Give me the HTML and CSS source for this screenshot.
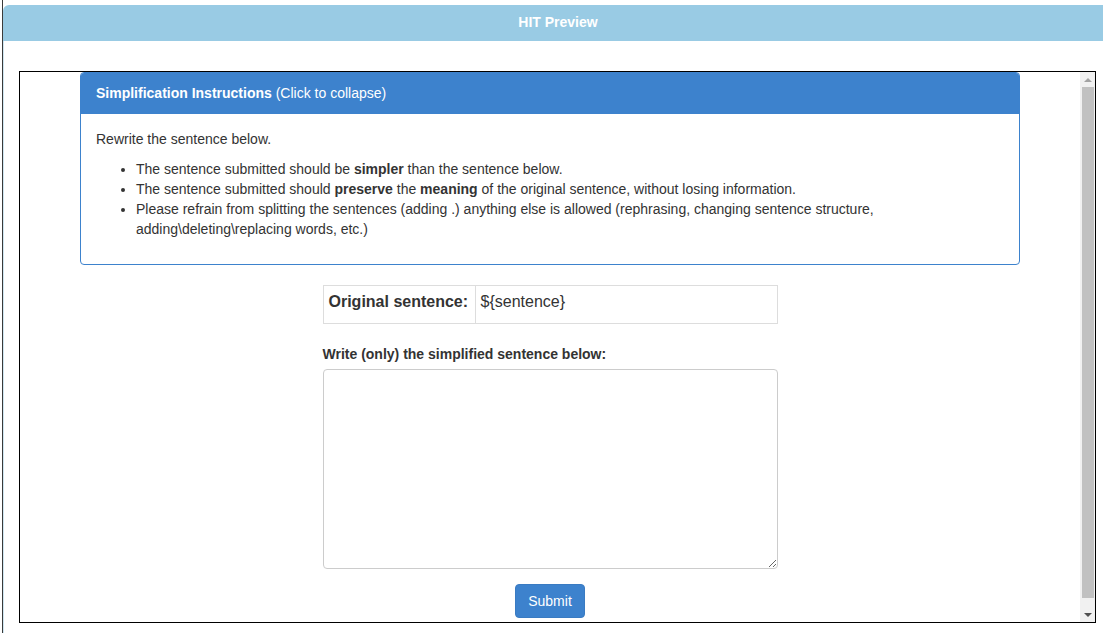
FILE: index.html
```html
<!DOCTYPE html>
<html>
<head>
<meta charset="utf-8">
<title>HIT Preview</title>
<link rel="stylesheet" href="styles.css">
</head>
<body>
<div class="page">
  <div class="hit-head">HIT Preview</div>
  <div class="hit-body">
    <div class="frame">
      <div class="frame-content">
        <div class="container">
          <div class="panel">
            <div class="panel-heading"><strong>Simplification Instructions</strong> (Click to collapse)</div>
            <div class="panel-body">
              <p>Rewrite the sentence below.</p>
              <ul>
                <li>The sentence submitted should be <strong>simpler</strong> than the sentence below.</li>
                <li>The sentence submitted should <strong>preserve</strong> the <strong>meaning</strong> of the original sentence, without losing information.</li>
                <li>Please refrain from splitting the sentences (adding .) anything else is allowed (rephrasing, changing sentence structure, adding\deleting\replacing words, etc.)</li>
              </ul>
            </div>
          </div>
          <div class="task">
            <table class="orig">
              <tr>
                <td class="orig-label">Original sentence:</td>
                <td class="orig-value">${sentence}</td>
              </tr>
            </table>
            <label class="answer-label" for="answer">Write (only) the simplified sentence below:</label>
            <textarea id="answer" class="answer"></textarea>
            <div class="actions"><button class="btn" type="button">Submit</button></div>
          </div>
        </div>
      </div>
      <div class="scrollbar">
        <div class="sb-btn sb-up"><span class="tri-up"></span></div>
        <div class="sb-track"><div class="sb-thumb"></div></div>
        <div class="sb-btn sb-down"><span class="tri-down"></span></div>
      </div>
    </div>
  </div>
</div>
</body>
</html>
```
FILE: styles.css
```css
html, body {
  margin: 0;
  padding: 0;
  background: #fff;
}
body {
  font-family: "Liberation Sans", Arial, Helvetica, sans-serif;
  font-size: 14px;
  line-height: 20px;
  color: #333;
  height: 633px;
  overflow: hidden;
}
* { box-sizing: border-box; }

.page {
  margin-left: 2px;
  border-left: 1px solid #3a3a3a;
  height: 633px;
  padding-top: 5px;
}
.hit-head {
  background: #99cbe4;
  color: #fff;
  font-weight: bold;
  font-size: 14px;
  height: 36px;
  line-height: 34px;
  text-align: center;
  padding-left: 10px;
  border-top-left-radius: 6px;
}
.hit-body {
  border-left: 1px solid #cfe6f1;
  padding: 30px 0 0 15px;
  height: 592px;
}
.frame {
  width: 1077px;
  height: 552px;
  border: 1px solid #000;
  display: flex;
}
.frame-content {
  flex: 1;
  overflow: hidden;
}
.container {
  width: 940px;
  margin: 0 auto;
}
.panel {
  border: 1px solid #3d82cd;
  border-radius: 4px;
  margin-bottom: 20px;
}
.panel-heading {
  background: #3d82cd;
  color: #fff;
  padding: 10px 15px 11px;
  border-top-left-radius: 3px;
  border-top-right-radius: 3px;
}
.panel-body {
  padding: 15px;
}
.panel-body p {
  margin: 0 0 10px;
}
.panel-body ul {
  margin: 0 0 10px;
  padding-left: 40px;
}
.task {
  width: 455px;
  margin: 0 auto;
}
.orig {
  border-collapse: collapse;
  width: 455px;
  font-size: 16px;
  line-height: 22px;
}
.orig td {
  border: 1px solid #ddd;
  padding: 5px 5px 10px;
  vertical-align: top;
}
.orig-label {
  font-weight: bold;
  width: 152px;
}
.answer-label {
  display: block;
  font-weight: bold;
  margin: 20px 0 5px;
}
.answer {
  display: block;
  width: 455px;
  height: 200px;
  border: 1px solid #ccc;
  border-radius: 4px;
  font-family: inherit;
  font-size: 14px;
  padding: 6px 12px;
  resize: vertical;
}
.actions {
  text-align: center;
  margin-top: 15px;
}
.btn {
  font-family: inherit;
  font-size: 14px;
  line-height: 20px;
  padding: 6px 12px;
  color: #fff;
  background: #3d82cd;
  border: 1px solid #3a7bc2;
  border-radius: 4px;
  width: 70px;
}
.scrollbar {
  width: 15px;
  background: #f1f1f1;
  display: flex;
  flex-direction: column;
}
.sb-btn {
  height: 15px;
  display: flex;
  align-items: center;
  justify-content: center;
}
.sb-track {
  flex: 1;
  padding: 0 1px 8px 2px;
}
.sb-thumb {
  height: 511px;
  background: #c1c1c1;
}
.tri-up {
  width: 0; height: 0;
  border-left: 4px solid transparent;
  border-right: 4px solid transparent;
  border-bottom: 4px solid #a3a3a3;
}
.tri-down {
  width: 0; height: 0;
  border-left: 4px solid transparent;
  border-right: 4px solid transparent;
  border-top: 4px solid #505050;
}
```
